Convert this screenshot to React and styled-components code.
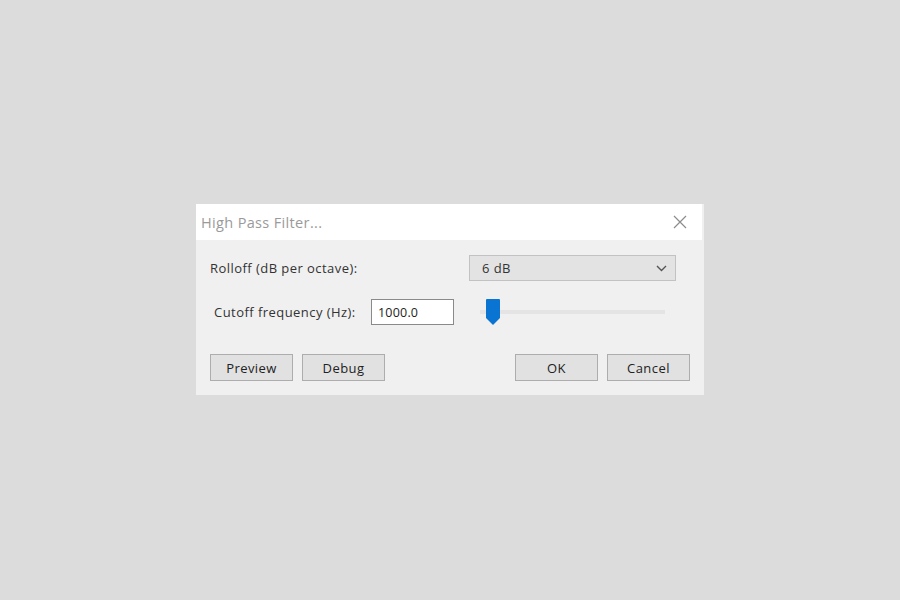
import React, { useState } from "react";
import styled, { createGlobalStyle } from "styled-components";

const GlobalStyle = createGlobalStyle`
  html, body {
    margin: 0;
    padding: 0;
    background: #dcdcdc;
    font-family: "Open Sans", "Noto Sans", sans-serif;
  }
`;

const Page = styled.div`
  width: 900px;
  height: 600px;
  display: flex;
  align-items: flex-start;
  justify-content: flex-start;
  padding: 204px 0 0 196px;
  box-sizing: border-box;
`;

const Dialog = styled.div`
  width: 508px;
  height: 191px;
  background: #f0f0f0;
  display: flex;
  flex-direction: column;
`;

const TitleBar = styled.div`
  height: 36px;
  margin-right: 2px;
  background: #ffffff;
  display: flex;
  align-items: center;
  justify-content: space-between;
  padding: 0 14px 0 5px;
`;

const Title = styled.span`
  font-size: 14.5px;
  color: #9a9a9a;
  letter-spacing: 0.35px;
`;

const Close = styled.button`
  border: none;
  background: none;
  padding: 0;
  width: 16px;
  height: 16px;
  display: flex;
  align-items: center;
  justify-content: center;
`;

const Body = styled.div`
  padding: 15px 14px 14px 14px;
  display: flex;
  flex-direction: column;
`;

const Row = styled.div`
  display: flex;
  align-items: center;
  height: 26px;
  margin-bottom: ${(p) => p.gap || 0}px;
  padding-left: ${(p) => p.indent || 0}px;
`;

const Label = styled.span`
  width: ${(p) => p.w}px;
  font-size: 13px;
  letter-spacing: 0.45px;
  color: #333;
`;

const Select = styled.div`
  width: 207px;
  height: 26px;
  box-sizing: border-box;
  background: #e3e3e3;
  border: 1px solid #c2c2c2;
  display: flex;
  align-items: center;
  justify-content: space-between;
  padding: 0 8px 0 12px;
  font-size: 13px;
  letter-spacing: 0.45px;
  color: #333;
`;

const Input = styled.input`
  width: 83px;
  height: 26px;
  box-sizing: border-box;
  border: 1px solid #8a8a8a;
  background: #fff;
  font-family: inherit;
  font-size: 12.5px;
  letter-spacing: 0.2px;
  color: #222;
  padding: 0 6px;
  outline: none;
`;

const Slider = styled.div`
  position: relative;
  width: 185px;
  height: 26px;
  margin-left: 26px;
  display: flex;
  align-items: center;
`;

const Track = styled.div`
  width: 100%;
  height: 4px;
  background: #e4e4e4;
`;

const Thumb = styled.svg`
  position: absolute;
  left: 6px;
  top: 0;
`;

const Buttons = styled.div`
  display: flex;
  gap: 9px;
  margin-top: 29px;
`;

const Spacer = styled.div`
  flex: 1;
`;

const Button = styled.button`
  width: 83px;
  height: 27px;
  box-sizing: border-box;
  background: #e1e1e1;
  border: 1px solid #adadad;
  font-family: inherit;
  font-size: 13px;
  letter-spacing: 0.45px;
  color: #222;
  padding: 0;
`;

export default function App() {
  const [freq, setFreq] = useState("1000.0");
  return (
    <>
      <GlobalStyle />
      <Page>
        <Dialog>
          <TitleBar>
            <Title>High Pass Filter...</Title>
            <Close aria-label="Close">
              <svg width="14" height="14" viewBox="0 0 14 14">
                <path d="M1 1 L13 13 M13 1 L1 13" stroke="#8c8c8c" strokeWidth="1.2" fill="none" />
              </svg>
            </Close>
          </TitleBar>
          <Body>
            <Row gap={18}>
              <Label w={259}>Rolloff (dB per octave):</Label>
              <Select>
                <span>6 dB</span>
                <svg width="11" height="7" viewBox="0 0 11 7">
                  <path d="M1 1 L5.5 5.5 L10 1" stroke="#555" strokeWidth="1.4" fill="none" />
                </svg>
              </Select>
            </Row>
            <Row indent={4}>
              <Label w={157}>Cutoff frequency (Hz):</Label>
              <Input value={freq} onChange={(e) => setFreq(e.target.value)} />
              <Slider>
                <Track />
                <Thumb width="14" height="26" viewBox="0 0 14 26">
                  <path d="M0 1 Q0 0 1 0 L13 0 Q14 0 14 1 L14 19 L7 26 L0 19 Z" fill="#0a74d2" />
                </Thumb>
              </Slider>
            </Row>
            <Buttons>
              <Button>Preview</Button>
              <Button>Debug</Button>
              <Spacer />
              <Button>OK</Button>
              <Button>Cancel</Button>
            </Buttons>
          </Body>
        </Dialog>
      </Page>
    </>
  );
}
